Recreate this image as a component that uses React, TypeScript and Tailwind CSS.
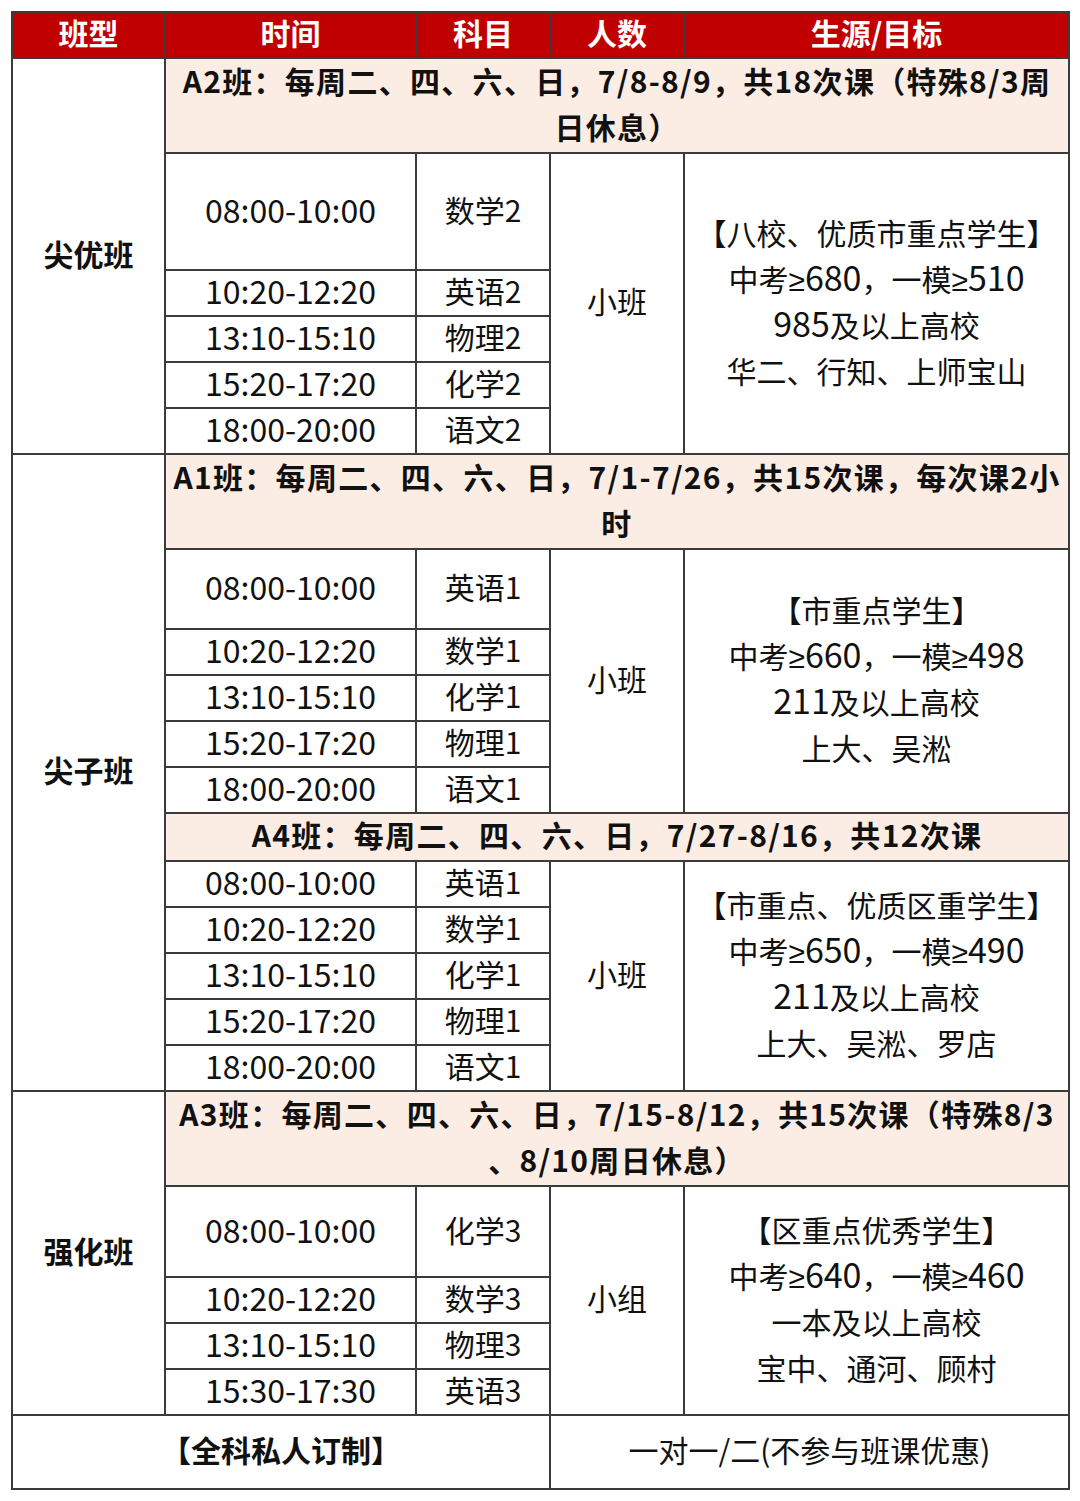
import React from "react"

type Lesson = { time: string; subject: string }

type Group = {
  title: React.ReactNode
  titleHeight: string
  firstHeight: string
  lessons: Lesson[]
  size: string
  target: string[]
}

const cell = "border-2 border-[#3b3b3b] text-center align-middle p-0"
const font = { fontFamily: '"Noto Sans CJK SC", "Noto Sans", sans-serif' }
const latin = { fontFamily: '"Liberation Sans", sans-serif' }

const a2: Group = {
  title: (
    <>
      A2班：每周二、四、六、日，7/8-8/9，共18次课（特殊8/3周
      <br />
      日休息）
    </>
  ),
  titleHeight: "h-[95px]",
  firstHeight: "h-[117px]",
  lessons: [
    { time: "08:00-10:00", subject: "数学2" },
    { time: "10:20-12:20", subject: "英语2" },
    { time: "13:10-15:10", subject: "物理2" },
    { time: "15:20-17:20", subject: "化学2" },
    { time: "18:00-20:00", subject: "语文2" },
  ],
  size: "小班",
  target: ["【八校、优质市重点学生】", "中考≥680，一模≥510", "985及以上高校", "华二、行知、上师宝山"],
}

const a1: Group = {
  title: (
    <>
      A1班：每周二、四、六、日，7/1-7/26，共15次课，每次课2小
      <br />
      时
    </>
  ),
  titleHeight: "h-[95px]",
  firstHeight: "h-[80px]",
  lessons: [
    { time: "08:00-10:00", subject: "英语1" },
    { time: "10:20-12:20", subject: "数学1" },
    { time: "13:10-15:10", subject: "化学1" },
    { time: "15:20-17:20", subject: "物理1" },
    { time: "18:00-20:00", subject: "语文1" },
  ],
  size: "小班",
  target: ["【市重点学生】", "中考≥660，一模≥498", "211及以上高校", "上大、吴淞"],
}

const a4: Group = {
  title: <>A4班：每周二、四、六、日，7/27-8/16，共12次课</>,
  titleHeight: "h-[46px]",
  firstHeight: "h-[46px]",
  lessons: [
    { time: "08:00-10:00", subject: "英语1" },
    { time: "10:20-12:20", subject: "数学1" },
    { time: "13:10-15:10", subject: "化学1" },
    { time: "15:20-17:20", subject: "物理1" },
    { time: "18:00-20:00", subject: "语文1" },
  ],
  size: "小班",
  target: ["【市重点、优质区重学生】", "中考≥650，一模≥490", "211及以上高校", "上大、吴淞、罗店"],
}

const a3: Group = {
  title: (
    <>
      A3班：每周二、四、六、日，7/15-8/12，共15次课（特殊8/3
      <br />
      、8/10周日休息）
    </>
  ),
  titleHeight: "h-[95px]",
  firstHeight: "h-[91px]",
  lessons: [
    { time: "08:00-10:00", subject: "化学3" },
    { time: "10:20-12:20", subject: "数学3" },
    { time: "13:10-15:10", subject: "物理3" },
    { time: "15:30-17:30", subject: "英语3" },
  ],
  size: "小组",
  target: ["【区重点优秀学生】", "中考≥640，一模≥460", "一本及以上高校", "宝中、通河、顾村"],
}

// CJK glyphs sit a little low in Noto, nudge text up
function Up({ children }: { children: React.ReactNode }) {
  return <div className="-translate-y-[3px]">{children}</div>
}

// digits a touch larger, ≥ from a latin face so it stays narrow
function TargetLine({ text }: { text: string }) {
  const parts = text.split(/([0-9]+|≥)/).filter(Boolean)
  return (
    <div>
      {parts.map((p, i) =>
        p === "≥" ? (
          <span key={i} style={latin} className="leading-none">
            ≥
          </span>
        ) : /^[0-9]+$/.test(p) ? (
          <span key={i} className="text-[34px] leading-none">
            {p}
          </span>
        ) : (
          <span key={i}>{p}</span>
        )
      )}
    </div>
  )
}

function GroupRows({ group, label, labelSpan }: { group: Group; label?: string; labelSpan?: number }) {
  return (
    <>
      <tr className={group.titleHeight}>
        {label ? (
          <td rowSpan={labelSpan} className={`${cell} bg-white text-[30px] font-bold`}>
            <Up>{label}</Up>
          </td>
        ) : null}
        <td colSpan={4} className={`${cell} bg-[#fcede4] text-[30px] font-bold leading-[46px] tracking-[1.3px]`}>
          <Up>{group.title}</Up>
        </td>
      </tr>
      {group.lessons.map((lesson, i) => (
        <tr key={lesson.time + lesson.subject} className={i === 0 ? group.firstHeight : "h-[46px]"}>
          <td className={`${cell} text-[32px] leading-[40px]`}>
            <Up>{lesson.time}</Up>
          </td>
          <td className={`${cell} text-[30px] leading-[40px]`}>
            <Up>{lesson.subject}</Up>
          </td>
          {i === 0 ? (
            <>
              <td rowSpan={group.lessons.length} className={`${cell} text-[30px]`}>
                <Up>{group.size}</Up>
              </td>
              <td rowSpan={group.lessons.length} className={`${cell} text-[30px] leading-[46px]`}>
                <Up>
                  {group.target.map((line) => (
                    <TargetLine key={line} text={line} />
                  ))}
                </Up>
              </td>
            </>
          ) : null}
        </tr>
      ))}
    </>
  )
}

export default function App() {
  return (
    <div className="min-h-[1501px] bg-white pt-[11px] pl-[11px] text-[#111]" style={font}>
      <table className="w-[1057px] table-fixed border-collapse">
        <colgroup>
          <col className="w-[153px]" />
          <col className="w-[251px]" />
          <col className="w-[134px]" />
          <col className="w-[134px]" />
          <col className="w-[385px]" />
        </colgroup>
        <tbody>
          <tr className="h-[46px] bg-[#c00000] text-white">
            {["班型", "时间", "科目", "人数", "生源/目标"].map((h) => (
              <td key={h} className={`${cell} text-[30px] font-bold leading-[40px]`}>
                <Up>{h}</Up>
              </td>
            ))}
          </tr>
          <GroupRows group={a2} label="尖优班" labelSpan={6} />
          <GroupRows group={a1} label="尖子班" labelSpan={12} />
          <GroupRows group={a4} />
          <GroupRows group={a3} label="强化班" labelSpan={5} />
          <tr className="h-[74px]">
            <td colSpan={3} className={`${cell} text-[30px] font-bold`}>
              <Up>【全科私人订制】</Up>
            </td>
            <td colSpan={2} className={`${cell} text-[30px]`}>
              <Up>一对一/二(不参与班课优惠)</Up>
            </td>
          </tr>
        </tbody>
      </table>
    </div>
  )
}
